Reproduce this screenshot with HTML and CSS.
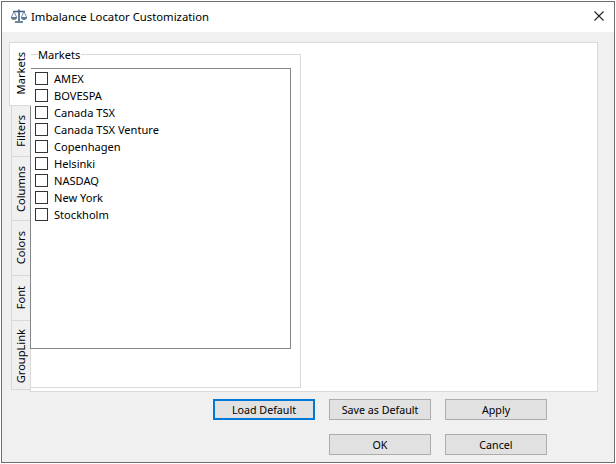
FILE: index.html
```html
<!DOCTYPE html>
<html lang="en">
<head>
<meta charset="utf-8">
<title>Imbalance Locator Customization</title>
<link rel="stylesheet" href="styles.css">
</head>
<body>
<div class="window">
  <header class="titlebar">
    <svg class="app-icon" width="18" height="16" viewBox="0 0 18 16">
      <path d="M9 1.5V13M3 3.5h12M5 14h8" stroke="#3f5f7f" stroke-width="1.6" fill="none"/>
      <path d="M4 3.5L1.5 9M4 3.5L6.5 9M14 3.5L11.5 9M14 3.5L16.5 9" stroke="#6f8aa5" stroke-width="1" fill="none"/>
      <path d="M1 9h6c0 2.2-1.2 3-3 3s-3-.8-3-3z" fill="#5a7896"/>
      <path d="M11 9h6c0 2.2-1.2 3-3 3s-3-.8-3-3z" fill="#5a7896"/>
      <path d="M2.5 11h3l-1 1h-1z" fill="#d08a3a"/>
    </svg>
    <span class="title">Imbalance Locator Customization</span>
    <svg class="close" width="10" height="10" viewBox="0 0 10 10">
      <path d="M.5.5l9 9M9.5.5l-9 9" stroke="#222" stroke-width="1.1" fill="none"/>
    </svg>
  </header>
  <main class="content">
    <div class="tabset">
      <nav class="tabs">
        <div class="tab tab-active tab-markets"><span>Markets</span></div>
        <div class="tab tab-filters"><span>Filters</span></div>
        <div class="tab tab-columns"><span>Columns</span></div>
        <div class="tab tab-colors"><span>Colors</span></div>
        <div class="tab tab-font"><span>Font</span></div>
        <div class="tab tab-grouplink"><span>GroupLink</span></div>
      </nav>
      <section class="pane">
        <div class="group">
          <span class="legend">Markets</span>
          <ul class="list">
            <li class="item"><span class="check"></span>AMEX</li>
            <li class="item"><span class="check"></span>BOVESPA</li>
            <li class="item"><span class="check"></span>Canada TSX</li>
            <li class="item"><span class="check"></span>Canada TSX Venture</li>
            <li class="item"><span class="check"></span>Copenhagen</li>
            <li class="item"><span class="check"></span>Helsinki</li>
            <li class="item"><span class="check"></span>NASDAQ</li>
            <li class="item"><span class="check"></span>New York</li>
            <li class="item"><span class="check"></span>Stockholm</li>
          </ul>
        </div>
      </section>
    </div>
    <div class="actions">
      <button class="btn btn-focus">Load Default</button>
      <button class="btn">Save as Default</button>
      <button class="btn">Apply</button>
    </div>
    <div class="actions actions-bottom">
      <button class="btn">OK</button>
      <button class="btn">Cancel</button>
    </div>
  </main>
</div>
</body>
</html>
```
FILE: styles.css
```css
* { box-sizing: border-box; }
html, body { margin: 0; padding: 0; background: #fff; }
body { width: 616px; height: 464px; padding: 1px; font-family: "Noto Sans", "Open Sans", sans-serif; font-size: 11.1px; color: #000; overflow: hidden; }
.window { width: 614px; height: 462px; border: 1px solid #6e6e6e; display: flex; flex-direction: column; background: #f0f0f0; }
.titlebar { height: 30px; flex: none; background: #fff; display: flex; align-items: center; padding: 0 10px 2px 8px; }
.app-icon { flex: none; }
.title { margin-left: 3px; flex: 1; font-size: 11.3px; }
.close { flex: none; }
.content { flex: 1; display: flex; flex-direction: column; padding: 10px 16px 0 7px; }
.tabset { display: flex; height: 350px; }
.tabs { width: 21px; flex: none; display: flex; flex-direction: column; position: relative; z-index: 1; }
.tab { margin-left: 2px; border: 1px solid #d9d9d9; border-top: 0; border-right: 0; background: #f0f0f0; display: flex; align-items: center; justify-content: center; }
.tab span { writing-mode: vertical-rl; transform: rotate(180deg); line-height: 16px; }
.tab-active { margin-left: 0; margin-right: -1px; border-top: 1px solid #d9d9d9; background: #fff; height: 64px; padding-bottom: 2px; }
.tab-filters { height: 51px; }
.tab-columns { height: 64px; }
.tab-colors { height: 55px; }
.tab-font { height: 45px; }
.tab-grouplink { height: 69px; padding-top: 3px; }
.pane { width: 568px; flex: none; background: #fff; border: 1px solid #d9d9d9; padding: 11px 0 3px 0; }
.group { width: 270px; height: 334px; border: 1px solid #d9d9d9; border-left: 0; position: relative; padding-top: 13px; }
.legend { position: absolute; left: 7px; top: -7px; padding: 0 1px 0 0; background: #fff; line-height: 14px; }
.list { list-style: none; margin: 0 0 0 -1px; padding: 1px 0 0 4px; width: 261px; height: 281px; background: #fff; border: 1px solid #82878c; }
.item { height: 17px; display: flex; align-items: center; line-height: 17px; }
.check { width: 13px; height: 13px; border: 1px solid #333; background: #fff; margin-right: 6px; flex: none; }
.actions { display: flex; gap: 14px; margin-top: 7px; padding-left: 204px; }
.actions-bottom { margin-top: 14px; padding-left: 320px; }
.btn { width: 102px; height: 21px; padding: 0; margin: 0; border: 1px solid #adadad; background: #e1e1e1; font: inherit; font-size: 10.7px; color: #000; border-radius: 0; }
.btn-focus { border: 2px solid #0078d7; }
```
